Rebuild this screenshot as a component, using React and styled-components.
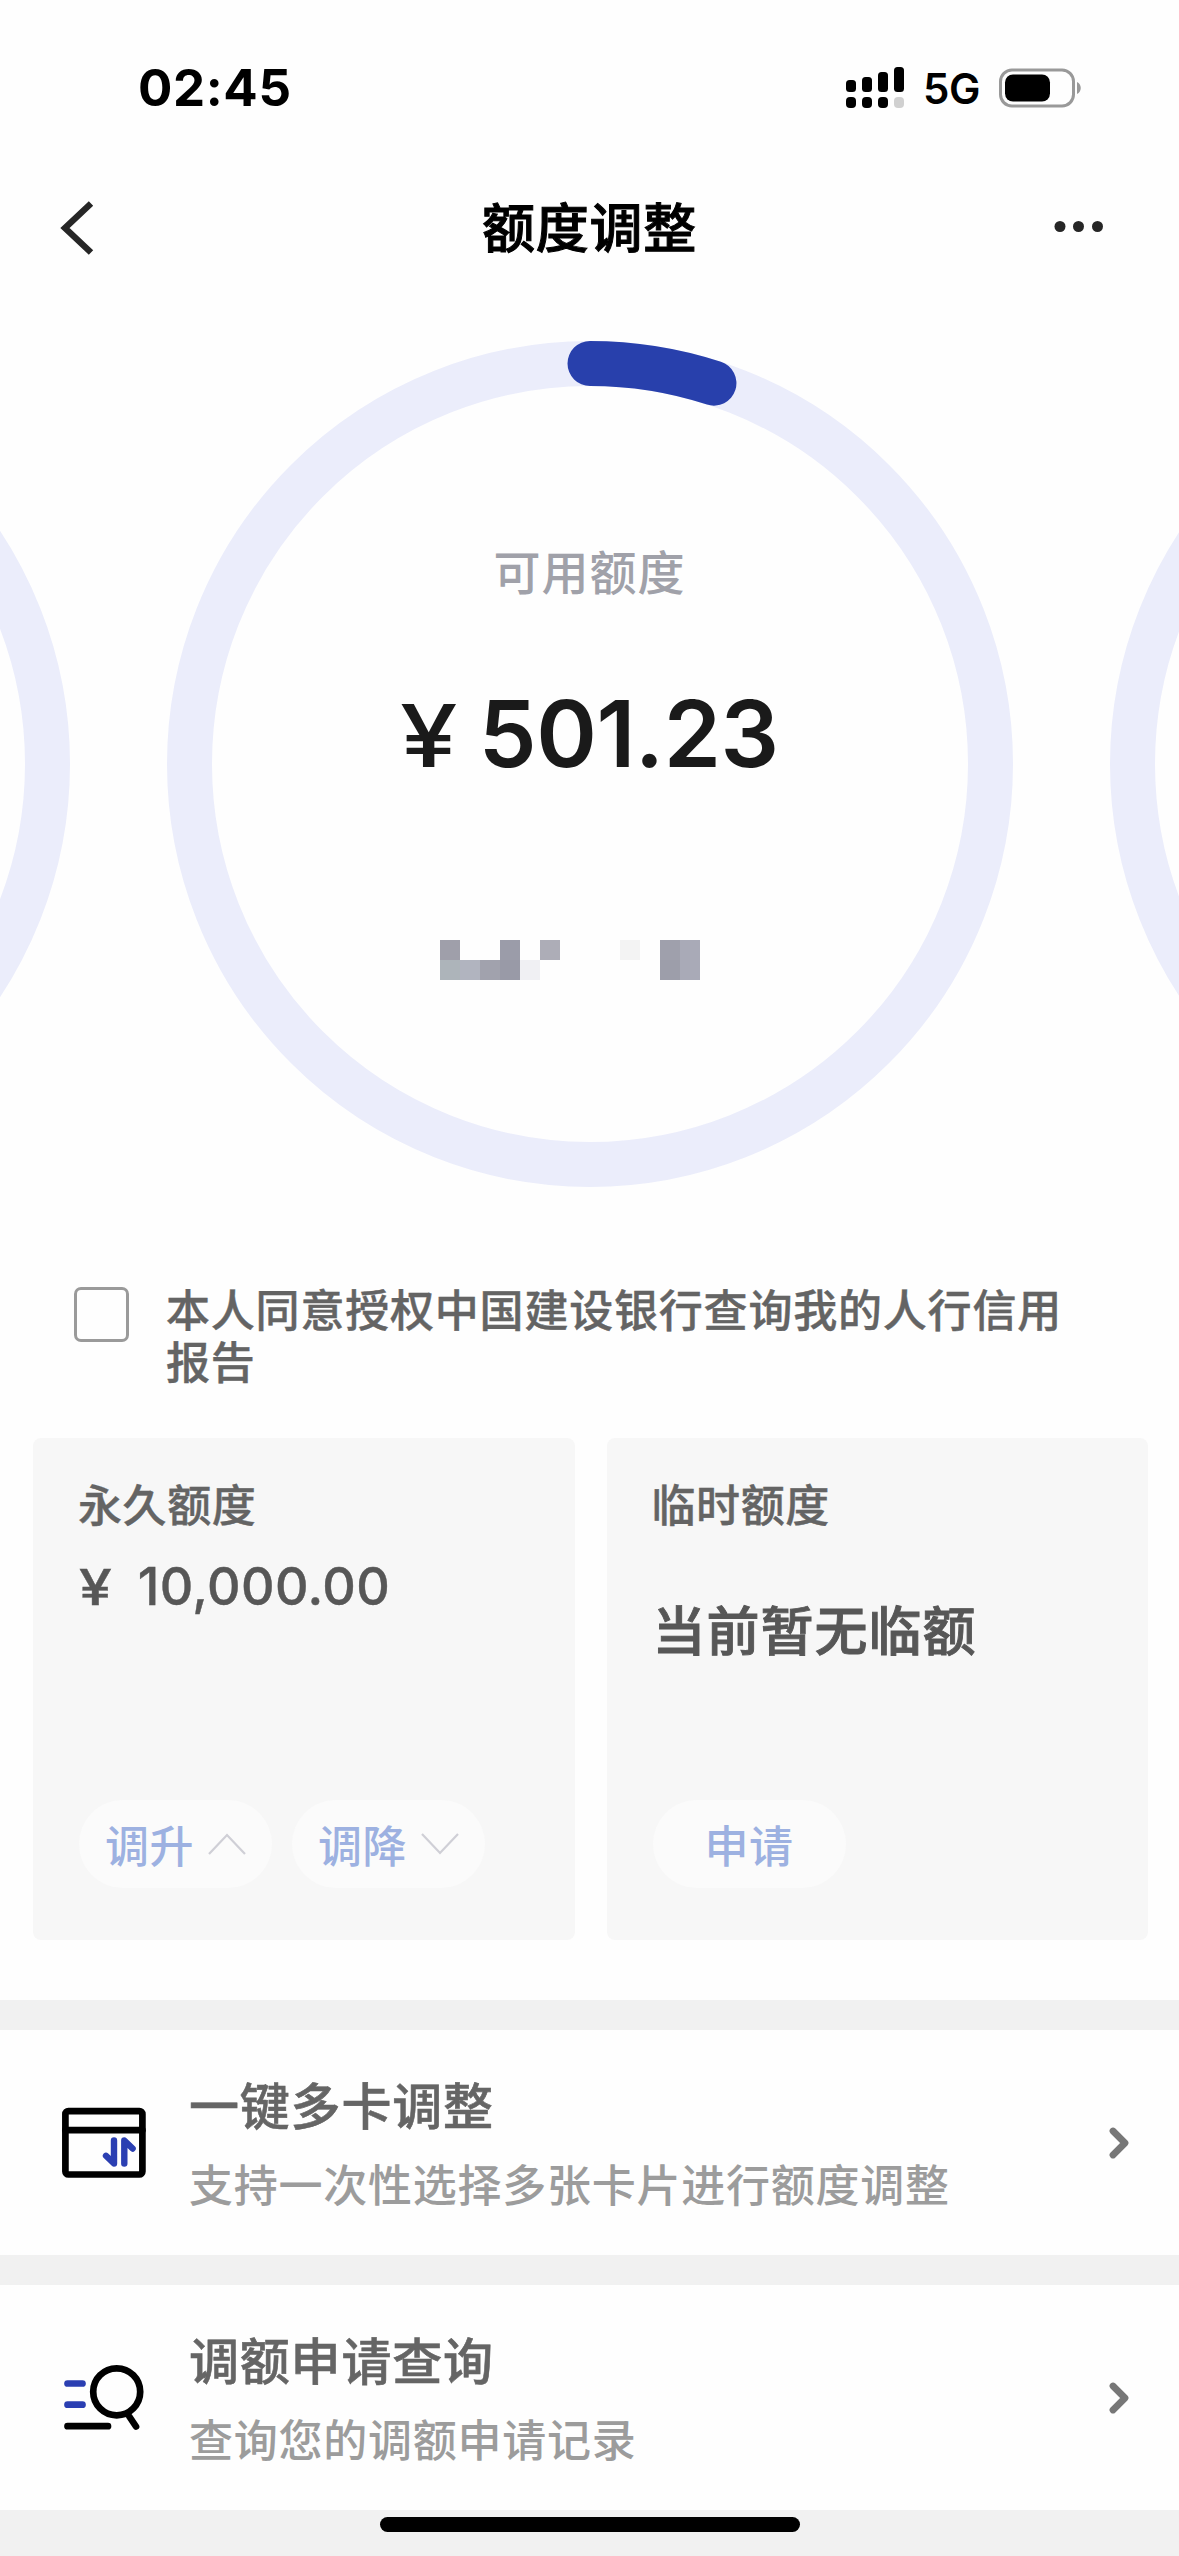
import React, { useState } from "react";
import styled, { createGlobalStyle } from "styled-components";

const GlobalStyle = createGlobalStyle`
  * {
    box-sizing: border-box;
  }
  body {
    margin: 0;
    background: #fefefe;
    font-family: Inter, "Noto Sans CJK SC", sans-serif;
    font-weight: 500;
  }
  svg {
    display: block;
    flex: none;
  }
`;

const Page = styled.div`
  display: flex;
  flex-direction: column;
  width: 1179px;
  height: 2556px;
  overflow: hidden;
  background: #fefefe;
`;

const StatusBar = styled.div`
  display: flex;
  align-items: center;
  justify-content: space-between;
  height: 176px;
  padding: 0 97px 0 138px;
`;
const Time = styled.div`
  font-size: 51px;
  font-weight: 700;
  line-height: 60px;
  letter-spacing: 0.6px;
  color: #000;
`;
const StatusIcons = styled.div`
  display: flex;
  align-items: center;
`;
const Network = styled.div`
  width: 57px;
  margin: 2px 19px 0 17px;
  font-size: 42px;
  font-weight: 600;
  line-height: 48px;
  letter-spacing: -0.5px;
  color: #000;
`;

const NavBar = styled.div`
  display: flex;
  align-items: center;
  justify-content: space-between;
  height: 104px;
  padding: 0 74px 0 58px;
`;
const NavTitle = styled.h1`
  margin: 0;
  padding: 2px 0 0 28px;
  font-size: 53px;
  font-weight: 500;
  line-height: 64px;
  letter-spacing: 0.8px;
  color: #000;
  -webkit-text-stroke: 1px #000;
`;

const Carousel = styled.div`
  display: flex;
  justify-content: center;
  gap: 97px;
  height: 846px;
  margin-top: 61px;
`;
const RingBox = styled.div`
  display: grid;
  flex: none;
  width: 846px;
  height: 846px;
  & > * {
    grid-area: 1 / 1;
  }
`;
const RingContent = styled.div`
  display: flex;
  flex-direction: column;
  align-items: center;
  padding-top: 202px;
`;
const RingLabel = styled.div`
  font-size: 47px;
  line-height: 60px;
  letter-spacing: 1px;
  color: #a0a1a9;
`;
const Amount = styled.div`
  display: flex;
  align-items: baseline;
  gap: 31px;
  margin-top: 75px;
  font-size: 92px;
  font-weight: 600;
  line-height: 112px;
  letter-spacing: -0.5px;
  color: #1a1a1a;
`;
const Yen = styled.span`
  display: inline-block;
  font-size: ${(props) => props.$size}px;
  font-weight: 500;
  transform: scaleX(1.2);
  transform-origin: left;
`;
const Mosaic = styled.div`
  display: grid;
  grid-template-columns: repeat(13, 20px);
  grid-auto-rows: 20px;
  align-self: flex-start;
  margin: 148px 0 0 273px;
`;
const MosaicCell = styled.div`
  background: ${(props) => props.$color || "transparent"};
`;

const Agreement = styled.label`
  display: flex;
  align-items: flex-start;
  gap: 37px;
  height: 251px;
  padding: 98px 100px 0 74px;
`;
const Checkbox = styled.input`
  appearance: none;
  flex: none;
  width: 55px;
  height: 55px;
  margin: 2px 0 0;
  border: 3px solid #9a9a9a;
  border-radius: 7px;
  background: ${(props) => (props.checked ? "#2a41ae" : "#fefefe")};
`;
const AgreementText = styled.div`
  width: 910px;
  font-size: 44px;
  line-height: 52px;
  letter-spacing: 0.8px;
  color: #646464;
  -webkit-text-stroke: 0.4px #646464;
`;

const Cards = styled.div`
  display: grid;
  grid-template-columns: 1fr 1fr;
  gap: 32px;
  height: 502px;
  padding: 0 31px 0 33px;
`;
const Card = styled.div`
  display: flex;
  flex-direction: column;
  padding: 40px 45px 52px;
  border-radius: 8px;
  background: #f7f7f7;
`;
const CardTitle = styled.div`
  font-size: 44px;
  line-height: 56px;
  letter-spacing: 0.6px;
  color: #646464;
  -webkit-text-stroke: 0.4px #646464;
`;
const CardAmount = styled.div`
  display: flex;
  align-items: baseline;
  gap: 31px;
  margin-top: 22px;
  padding-left: 1px;
  font-size: 52px;
  line-height: 62px;
  letter-spacing: 0.4px;
  color: #575757;
  -webkit-text-stroke: 0.4px #575757;
`;
const CardEmpty = styled.div`
  margin-top: 66px;
  padding-left: 1px;
  font-size: 53px;
  line-height: 64px;
  letter-spacing: 1px;
  color: #575757;
  -webkit-text-stroke: 0.9px #575757;
`;
const CardActions = styled.div`
  display: flex;
  gap: 20px;
  margin-top: auto;
  padding-left: 1px;
`;
const PillButton = styled.button`
  display: flex;
  align-items: center;
  justify-content: center;
  gap: 14px;
  width: 193px;
  height: 88px;
  padding: 0;
  border: none;
  border-radius: 44px;
  background: #fbfbfb;
  font: inherit;
  font-size: 44px;
  letter-spacing: 0.4px;
  color: #9db1e1;
`;

const Divider = styled.div`
  height: 30px;
  margin-top: ${(props) => props.$top || 0}px;
  background: #f1f1f1;
`;
const MenuRow = styled.div`
  display: flex;
  align-items: center;
  height: 225px;
  padding: 0 48px 0 50px;
`;
const MenuText = styled.div`
  flex: 1;
  padding-top: 5px;
  margin-left: 29px;
`;
const MenuTitle = styled.div`
  font-size: 50px;
  line-height: 60px;
  letter-spacing: 0.8px;
  color: #656565;
  -webkit-text-stroke: 0.6px #656565;
`;
const MenuDesc = styled.div`
  margin-top: 21px;
  font-size: 44px;
  line-height: 56px;
  letter-spacing: 0.75px;
  color: #9c9c9c;
`;
const Footer = styled.div`
  display: flex;
  justify-content: center;
  flex: 1;
  padding-top: 7px;
  background: #f1f1f1;
`;
const HomeIndicator = styled.div`
  width: 420px;
  height: 15px;
  border-radius: 8px;
  background: #000;
`;

// two rows of hidden digits, empty string = blank cell
const mosaic = [
  "#9f9faa", "", "", "#9b9ca9", "", "#adadb7", "", "", "", "#f3f3f3", "", "#9fa0ac", "#a9aab7",
  "#adb4ba", "#b1b4bf", "#a1a2ad", "#999aa7", "#f0f0f3", "", "", "", "", "", "", "#9d9eaa", "#a9aab7",
];

const menus = [
  { title: "一键多卡调整", desc: "支持一次性选择多张卡片进行额度调整", icon: <CardIcon /> },
  { title: "调额申请查询", desc: "查询您的调额申请记录", icon: <SearchIcon /> },
];

function SignalIcon() {
  return (
    <svg width="60" height="44" viewBox="0 0 60 44">
      <rect x="0" y="14" width="10" height="12" rx="3.5" />
      <rect x="16" y="11" width="10" height="15" rx="3.5" />
      <rect x="32" y="6" width="10" height="20" rx="3.5" />
      <rect x="48" y="1" width="10" height="25" rx="3.5" />
      <rect x="0" y="31" width="10" height="11" rx="4" />
      <rect x="16" y="31" width="10" height="11" rx="4" />
      <rect x="32" y="31" width="10" height="11" rx="4" />
      <rect x="48" y="31" width="10" height="11" rx="4" fill="#d0d0d0" />
    </svg>
  );
}

function BatteryIcon() {
  return (
    <svg width="83" height="40" viewBox="0 0 83 40">
      <rect x="1.5" y="2" width="73" height="36" rx="11.5" fill="none" stroke="#999" strokeWidth="3" />
      <rect x="6" y="6.5" width="45" height="27" rx="8" />
      <path d="M78 14c5 2 5 10 0 12z" fill="#999" />
    </svg>
  );
}

function Ring({ percent, children }) {
  const r = 400.5;
  const length = 2 * Math.PI * r;
  return (
    <RingBox>
      <svg width="846" height="846" viewBox="0 0 846 846" fill="none" strokeWidth="45">
        <circle cx="423" cy="423" r={r} stroke="#ebedfb" />
        {percent > 0 && (
          <circle
            cx="423"
            cy="423"
            r={r}
            stroke="#2840ac"
            strokeLinecap="round"
            strokeDasharray={`${(length * percent) / 100} ${length}`}
            transform="rotate(-90 423 423)"
          />
        )}
      </svg>
      {children}
    </RingBox>
  );
}

function SmallArrow({ down }) {
  return (
    <svg width="38" height="22" viewBox="0 0 38 22" fill="none" stroke="#cfcfd6" strokeWidth="2.2">
      <path d={down ? "M1 1L19 20L37 1" : "M1 21L19 2L37 21"} />
    </svg>
  );
}

function CardIcon() {
  return (
    <svg width="110" height="110" viewBox="0 -2.5 110 110" fill="none" strokeWidth="6.7" strokeLinecap="round" strokeLinejoin="round">
      <rect x="15.4" y="20.6" width="77" height="63.4" rx="3" stroke="#000" />
      <path d="M15.4 39.7H92.4" stroke="#000" />
      <path d="M64 50V73L56 65.3M74.3 73V50L82.6 58" stroke="#2b3fb2" strokeWidth="6.4" />
    </svg>
  );
}

function SearchIcon() {
  return (
    <svg width="110" height="110" viewBox="0 2.5 110 110" fill="none" stroke="#000" strokeWidth="6.7" strokeLinecap="round">
      <circle cx="66.7" cy="51.3" r="23.5" />
      <path d="M79.3 76L86 86M17.5 85.7H58" />
      <path d="M17.5 43H32.5M17.5 64.2H32.5" stroke="#2b3fb2" />
    </svg>
  );
}

function App() {
  const [agree, setAgree] = useState(false);

  return (
    <Page>
      <GlobalStyle />
      <StatusBar>
        <Time>02:45</Time>
        <StatusIcons>
          <SignalIcon />
          <Network>5G</Network>
          <BatteryIcon />
        </StatusIcons>
      </StatusBar>
      <NavBar>
        <svg width="40" height="60" viewBox="0 0 40 60" fill="none" stroke="#262626" strokeWidth="6.4">
          <path d="M33 5.5L7 30L33 54.5" />
        </svg>
        <NavTitle>额度调整</NavTitle>
        <svg width="52" height="14" viewBox="0 0 52 14" fill="#262626">
          <circle cx="7" cy="5.5" r="5.5" />
          <circle cx="25.5" cy="5.5" r="5.5" />
          <circle cx="44.5" cy="5.5" r="5.5" />
        </svg>
      </NavBar>

      <Carousel>
        <Ring percent={0} />
        <Ring percent={5.01}>
          <RingContent>
            <RingLabel>可用额度</RingLabel>
            <Amount>
              <Yen $size={86}>¥</Yen>
              <span>501.23</span>
            </Amount>
            <Mosaic>
              {mosaic.map((color, i) => (
                <MosaicCell key={i} $color={color} />
              ))}
            </Mosaic>
          </RingContent>
        </Ring>
        <Ring percent={0} />
      </Carousel>

      <Agreement>
        <Checkbox type="checkbox" checked={agree} onChange={(e) => setAgree(e.target.checked)} />
        <AgreementText>本人同意授权中国建设银行查询我的人行信用报告</AgreementText>
      </Agreement>

      <Cards>
        <Card>
          <CardTitle>永久额度</CardTitle>
          <CardAmount>
            <Yen $size={49}>¥</Yen>
            <span>10,000.00</span>
          </CardAmount>
          <CardActions>
            <PillButton>
              调升
              <SmallArrow />
            </PillButton>
            <PillButton>
              调降
              <SmallArrow down />
            </PillButton>
          </CardActions>
        </Card>
        <Card>
          <CardTitle>临时额度</CardTitle>
          <CardEmpty>当前暂无临额</CardEmpty>
          <CardActions>
            <PillButton>申请</PillButton>
          </CardActions>
        </Card>
      </Cards>

      {menus.map((menu, i) => (
        <React.Fragment key={menu.title}>
          <Divider $top={i === 0 ? 60 : 0} />
          <MenuRow>
            {menu.icon}
            <MenuText>
              <MenuTitle>{menu.title}</MenuTitle>
              <MenuDesc>{menu.desc}</MenuDesc>
            </MenuText>
            <svg width="24" height="36" viewBox="0 0 24 36" fill="none" stroke="#777" strokeWidth="6.8" strokeLinecap="round" strokeLinejoin="round">
              <path d="M6 6L18 18L6 30" />
            </svg>
          </MenuRow>
        </React.Fragment>
      ))}
      <Footer>
        <HomeIndicator />
      </Footer>
    </Page>
  );
}

export default App;
